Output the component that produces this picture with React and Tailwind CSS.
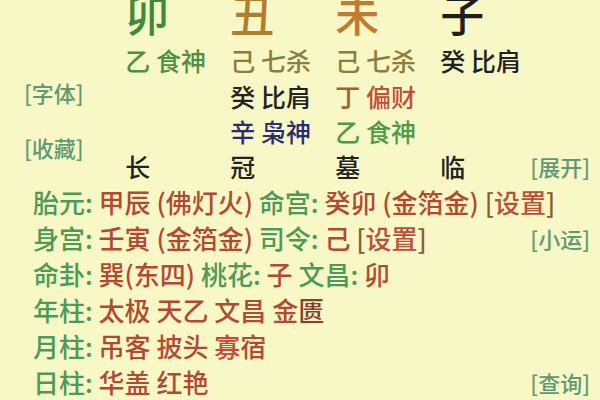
import React from "react";

const font = { fontFamily: '"Noto Sans CJK SC", "Noto Sans", sans-serif' };

function L({ children }) {
  return <span className="text-[#4c9a58]">{children}</span>;
}
function V({ children }) {
  return <span className="text-[#b24a32]">{children}</span>;
}
function Btn({ children }) {
  return <span className="text-[#5f9a74]">[{children}]</span>;
}
function Set() {
  return (
    <span className="text-[#8a5a34]">
      [<span className="text-[#b8503a]">设置</span>]
    </span>
  );
}

export default function App() {
  return (
    <div
      className="w-[600px] h-[400px] overflow-hidden bg-[#f8f7c6] leading-none whitespace-pre font-medium"
      style={font}
    >
      <div className="flex text-[25px]">
        <div className="w-[128px] flex flex-col pt-[77px] gap-[25px] pl-[24px] text-[22px]">
          <div className="h-[30px] flex items-center">
            <Btn>字体</Btn>
          </div>
          <div className="h-[30px] flex items-center">
            <Btn>收藏</Btn>
          </div>
        </div>
        <div className="grid grid-cols-[105px_105px_105px_90px]">
          <div className="h-[42px] flex items-end text-[44px] text-[#3f8a38] pb-[7px]">卯</div>
          <div className="h-[42px] flex items-end text-[44px] text-[#b07e2c] pb-[7px]">丑</div>
          <div className="h-[42px] flex items-end text-[44px] text-[#c27a2c] pb-[7px]">未</div>
          <div className="h-[42px] flex items-end text-[44px] text-[#1e1e1e] pb-[7px]">子</div>

          <div className="h-[36px] flex items-center text-[#4f8f42]">乙 食神</div>
          <div className="h-[36px] flex items-center text-[#8c7c3e]">己 七杀</div>
          <div className="h-[36px] flex items-center text-[#8c7c3e]">己 七杀</div>
          <div className="h-[36px] flex items-center text-[#222]">癸 比肩</div>

          <div className="h-[36px]" />
          <div className="h-[36px] flex items-center text-[#222]">癸 比肩</div>
          <div className="h-[36px] flex items-center">
            <span className="text-[#a0622a]">丁 </span>
            <span className="text-[#c05038]">偏财</span>
          </div>
          <div className="h-[36px]" />

          <div className="h-[34px]" />
          <div className="h-[34px] flex items-center text-[#2b2b72]">辛 枭神</div>
          <div className="h-[34px] flex items-center text-[#4f9a4a]">乙 食神</div>
          <div className="h-[34px]" />

          <div className="h-[36px] flex items-center text-[#222]">长</div>
          <div className="h-[36px] flex items-center text-[#222]">冠</div>
          <div className="h-[36px] flex items-center text-[#222]">墓</div>
          <div className="h-[36px] flex items-center text-[#222]">临</div>
        </div>
        <div className="flex-1 flex flex-col items-end pr-[10px] pt-[148px] text-[22px]">
          <div className="h-[36px] flex items-center">
            <Btn>展开</Btn>
          </div>
        </div>
      </div>

      <div className="flex flex-col pl-[33px] pr-[10px] text-[26px]">
        <div className="h-[36px] flex items-center">
          <L>胎元: </L>
          <V>甲辰 (佛灯火) </V>
          <L>命宫: </L>
          <V>癸卯 (金箔金) </V>
          <Set />
        </div>
        <div className="h-[36px] flex items-center justify-between">
          <div>
            <L>身宫: </L>
            <V>壬寅 (金箔金) </V>
            <L>司令: </L>
            <V>己 </V>
            <Set />
          </div>
          <span className="text-[22px]">
            <Btn>小运</Btn>
          </span>
        </div>
        <div className="h-[36px] flex items-center">
          <L>命卦: </L>
          <V>巽(东四) </V>
          <L>桃花: </L>
          <V>子 </V>
          <L>文昌: </L>
          <V>卯</V>
        </div>
        <div className="h-[36px] flex items-center">
          <L>年柱: </L>
          <V>太极 天乙 文昌 金</V>
          <span className="text-[#8e3c2a]">匮</span>
        </div>
        <div className="h-[36px] flex items-center">
          <L>月柱: </L>
          <V>吊客 披头 </V>
          <span className="text-[#c8463a]">寡</span>
          <V>宿</V>
        </div>
        <div className="h-[36px] flex items-center justify-between">
          <div>
            <L>日柱: </L>
            <V>华盖 红艳</V>
          </div>
          <span className="text-[22px]">
            <Btn>查询</Btn>
          </span>
        </div>
      </div>
    </div>
  );
}
